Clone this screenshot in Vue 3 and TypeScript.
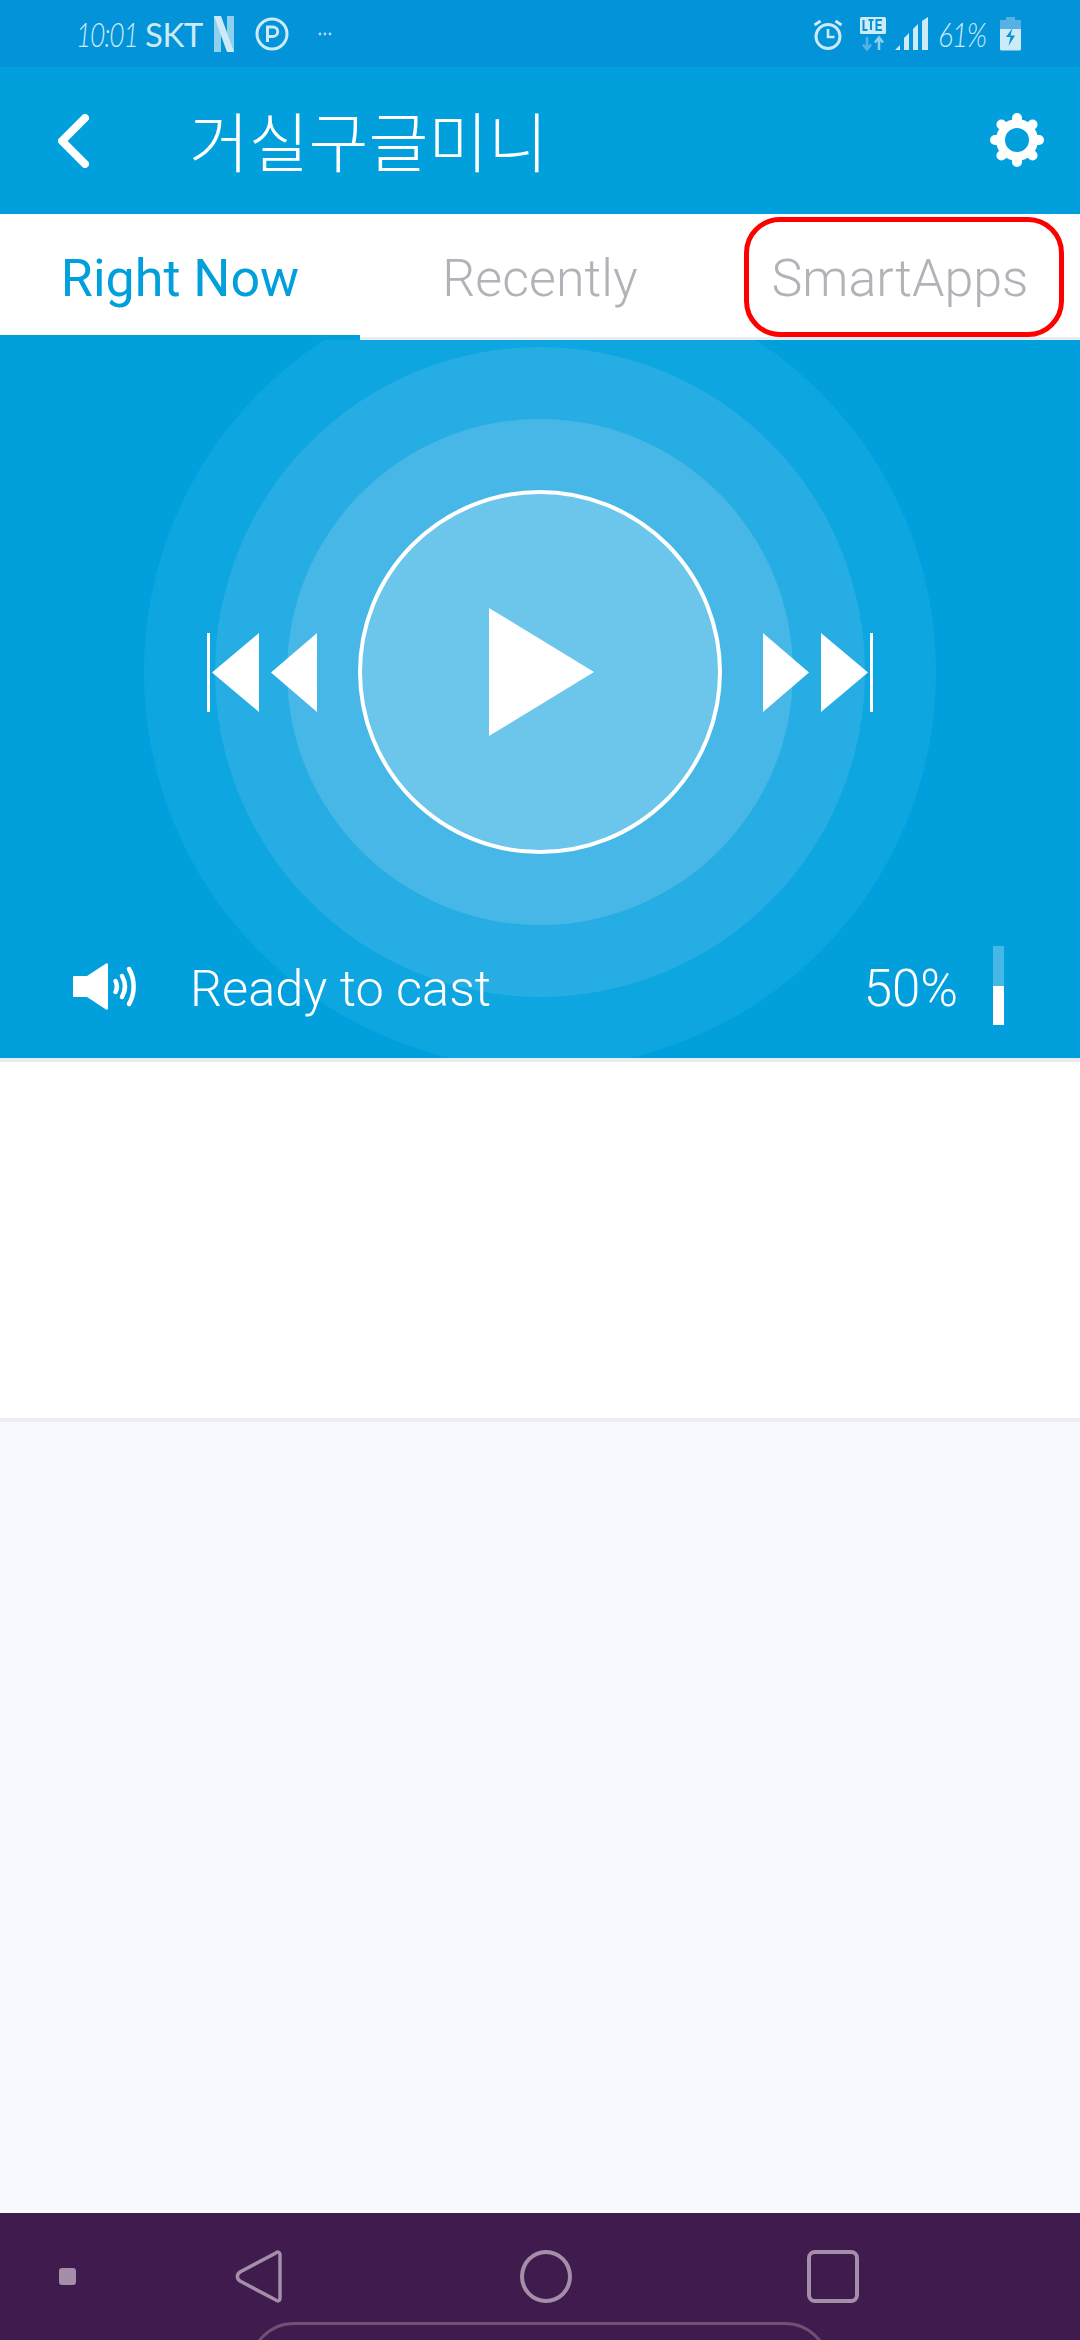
<script setup lang="ts">
const gearTeeth = [0, 45, 90, 135, 180, 225, 270, 315]
const volume = 50
</script>

<template>
  <div class="screen">
    <div class="status-bar">
      <span class="status-clock">10:01</span>
      <span class="status-carrier">SKT</span>
      <svg class="icon-netflix" width="20" height="36" viewBox="0 0 20 36">
        <path d="M0 0h7v36l-7 1z" fill="#8fd0ee" />
        <path d="M13 0h7v36l-7-1z" fill="#8fd0ee" />
        <path d="M0 0h7l13 36h-7z" fill="#cdeaf7" />
      </svg>
      <svg class="icon-parking" width="34" height="34" viewBox="0 0 34 34">
        <circle cx="17" cy="17" r="15" fill="none" stroke="#cdeaf7" stroke-width="3" />
        <path d="M12.5 25V10h5.5a4.6 4.6 0 0 1 0 9.4h-5.500" fill="none" stroke="#cdeaf7" stroke-width="3" />
      </svg>
      <svg class="icon-dots" width="14" height="4" viewBox="0 0 14 4">
        <circle cx="2" cy="2" r="1.400" fill="#a9dbf2" />
        <circle cx="7" cy="2" r="1.400" fill="#a9dbf2" />
        <circle cx="12" cy="2" r="1.400" fill="#a9dbf2" />
      </svg>
      <svg class="icon-alarm" width="30" height="34" viewBox="0 0 30 34">
        <circle cx="15" cy="19.500" r="12" fill="none" stroke="#cdeaf7" stroke-width="3" />
        <path d="M15 12v8h6.500" fill="none" stroke="#cdeaf7" stroke-width="2.600" />
        <path d="M1.500 8l6-4M28.500 8l-6-4" fill="none" stroke="#cdeaf7" stroke-width="3" />
      </svg>
      <svg class="icon-lte" width="26" height="34" viewBox="0 0 26 34">
        <rect x="0" y="0" width="26" height="17" rx="1.500" fill="#cdeaf7" />
        <path d="M3.500 3v10h4M11 3v10M8.500 3h5M22 3h-5.500v10H22M16.500 8h5" fill="none" stroke="#0393d8" stroke-width="2" />
        <path d="M7 20v12M3 27.500l4 5 4-5" fill="none" stroke="#55b2e2" stroke-width="2.500" />
        <path d="M19 33V21M15 25.500l4-5 4 5" fill="none" stroke="#8fd0ee" stroke-width="2.500" />
      </svg>
      <svg class="icon-signal" width="33" height="33" viewBox="0 0 33 33">
        <path d="M0 33l5-5v5zM9 33V21l5-5v17zM18 33V12l5-5v26zM27 33V4l6-4v33z" fill="#cdeaf7" />
      </svg>
      <span class="status-battery-text">61%</span>
      <svg class="icon-battery" width="21" height="34" viewBox="0 0 21 34">
        <path d="M6 0h9v3h6v9H0V3h6z" fill="#55b2e2" />
        <path d="M0 12h21v20a1.500 1.500 0 0 1-1.500 1.500h-18A1.500 1.500 0 0 1 0 32z" fill="#cdeaf7" />
        <path d="M12.500 11L6 20h4.500l-2 9L15 18.500h-4.500z" fill="#0393d8" />
      </svg>
    </div>

    <header class="app-header">
      <svg class="back-icon" width="31" height="54" viewBox="0 0 31 54">
        <path d="M27 4L4 27l23 23" fill="none" stroke="#fff" stroke-width="8" stroke-linecap="round" stroke-linejoin="round" />
      </svg>
      <h1 class="title">거실구글미니</h1>
      <svg class="gear-icon" width="56" height="56" viewBox="0 0 56 56">
        <circle cx="28" cy="28" r="16.500" fill="none" stroke="#fff" stroke-width="9" />
        <path
          v-for="angle in gearTeeth"
          :key="angle"
          d="M28 9v-3"
          stroke="#fff"
          stroke-width="10"
          stroke-linecap="round"
          :transform="`rotate(${angle} 28 28)`"
        />
      </svg>
    </header>

    <nav class="tabs">
      <div class="tab active">Right Now</div>
      <div class="tab">Recently</div>
      <div class="tab">SmartApps</div>
      <div class="highlight"></div>
    </nav>

    <section class="hero">
      <div class="stage">
        <div class="ring ring-outer"></div>
        <div class="ring ring-wide"></div>
        <div class="ring ring-inner"></div>
        <svg class="skip" width="110" height="79" viewBox="0 0 110 79">
          <rect x="0" y="0" width="3" height="79" fill="#fff" />
          <path d="M52 0v79L5 39.500zM110 0v79L64 39.500z" fill="#fff" />
        </svg>
        <div class="play-button">
          <svg width="105" height="128" viewBox="0 0 105 128">
            <path d="M0 0l105 64L0 128z" fill="#fff" />
          </svg>
        </div>
        <svg class="skip" width="110" height="79" viewBox="0 0 110 79">
          <path d="M0 0v79l46-39.500zM58 0v79l47-39.500z" fill="#fff" />
          <rect x="107" y="0" width="3" height="79" fill="#fff" />
        </svg>
      </div>

      <div class="cast-row">
        <svg class="speaker" width="67" height="47" viewBox="0 0 67 47">
          <path d="M1 13h13L33 .500a1.500 1.500 0 0 1 2 1V45.500a1.500 1.500 0 0 1-2 1L14 34H1a1 1 0 0 1-1-1V14a1 1 0 0 1 1-1z" fill="#fff" />
          <path d="M42.500 18c1.800 3.500 1.800 7.500 0 11M49 13c3.700 6.500 3.700 14.500 0 21M56 6c6.200 10.500 6.200 24.500 0 35" fill="none" stroke="#fff" stroke-width="4.500" stroke-linecap="round" />
        </svg>
        <span class="cast-label">Ready to cast</span>
        <span class="volume-label">{{ volume }}%</span>
        <div class="volume-bar">
          <div class="volume-fill" :style="{ height: volume + '%' }"></div>
        </div>
      </div>
    </section>

    <div class="blank-panel"></div>
    <div class="page-fill"></div>

    <footer class="nav-bar">
      <span class="nav-dot"></span>
      <svg class="nav-back" width="47" height="53" viewBox="0 0 47 53">
        <path d="M40 3.500c3-2.500 5-1.500 5 2v42c0 3.500-2 4.500-5 2L5 31c-3.500-2.500-3.500-6.500 0-9z" fill="none" stroke="#a48ea9" stroke-width="3.500" stroke-linejoin="round" />
      </svg>
      <span class="nav-home"></span>
      <span class="nav-recent"></span>
      <span class="gesture-pill"></span>
    </footer>
  </div>
</template>

<style>
html,
body {
  margin: 0;
  background: #f8f9fe;
}
</style>

<style scoped>
.screen {
  width: 1080px;
  height: 2340px;
  display: flex;
  flex-direction: column;
  overflow: hidden;
  font-family: Roboto, "Noto Sans CJK KR", sans-serif;
}

.status-bar {
  height: 67px;
  flex: none;
  display: flex;
  align-items: center;
  background: #0393d8;
  color: #cdeaf7;
  padding-left: 76px;
  box-sizing: border-box;
}

.status-clock {
  font-family: Lato, sans-serif;
  font-size: 33px;
  font-style: italic;
  font-weight: 300;
  letter-spacing: -1.5px;
  width: 69px;
  transform: scaleX(0.8);
  transform-origin: left center;
}

.status-carrier {
  font-family: Lato, sans-serif;
  font-size: 33px;
  letter-spacing: -0.5px;
  width: 69px;
}

.icon-parking {
  margin-left: 21px;
}

.icon-dots {
  margin-left: 29px;
}

.icon-alarm {
  margin-left: 481px;
}

.icon-lte {
  margin-left: 17px;
}

.icon-signal {
  margin-left: 9px;
}

.status-battery-text {
  font-family: Lato, sans-serif;
  font-size: 33px;
  font-style: italic;
  font-weight: 300;
  letter-spacing: -1.5px;
  margin-left: 10px;
  width: 62px;
  transform: scaleX(0.85);
  transform-origin: left center;
}

.app-header {
  height: 147px;
  flex: none;
  display: flex;
  align-items: center;
  background: #01a0dc;
  padding: 0 35px 2px 58px;
  box-sizing: border-box;
}

.back-icon {
  margin-top: 2px;
}

.title {
  margin: 0 0 0 100px;
  font-size: 65px;
  font-weight: 300;
  color: #fff;
  font-family: "Noto Sans CJK KR", sans-serif;
  line-height: 1;
}

.gear-icon {
  margin-left: auto;
}

.tabs {
  position: relative;
  height: 126px;
  flex: none;
  display: flex;
  background: #fff;
  border-bottom: 3px solid #e9edf1;
  box-sizing: border-box;
}

.tab {
  width: 360px;
  display: flex;
  align-items: center;
  justify-content: center;
  padding-top: 6px;
  font-size: 52px;
  font-weight: 300;
  color: #b1b3b9;
  box-sizing: border-box;
}

.tab.active {
  color: #01a0dc;
  font-weight: 400;
  height: 126px;
  border-bottom: 5px solid #01a0dc;
  padding-top: 8px;
}

.highlight {
  position: absolute;
  left: 744px;
  top: 3px;
  width: 320px;
  height: 120px;
  border: 5px solid #fe0000;
  border-radius: 36px;
  box-sizing: border-box;
}

.hero {
  position: relative;
  height: 718px;
  flex: none;
  background: #01a0dc;
  overflow: hidden;
  color: #fff;
}

.stage {
  position: relative;
  display: flex;
  align-items: center;
  justify-content: center;
  gap: 41px;
  margin-top: 150px;
  height: 364px;
}

.ring {
  position: absolute;
  left: 50%;
  top: 50%;
  border-radius: 50%;
  transform: translate(-50%, -50%);
}

.ring-outer {
  width: 792px;
  height: 792px;
  background: #0da6e0;
}

.ring-wide {
  width: 650px;
  height: 650px;
  background: #26ade3;
}

.ring-inner {
  width: 506px;
  height: 506px;
  background: #46b7e6;
}

.skip {
  position: relative;
  flex: none;
}

.play-button {
  position: relative;
  width: 364px;
  height: 364px;
  flex: none;
  display: flex;
  align-items: center;
  justify-content: center;
  border: 4px solid #fff;
  border-radius: 50%;
  background: #6cc5ea;
  box-sizing: border-box;
}

.play-button svg {
  margin-left: 2px;
}

.cast-row {
  position: relative;
  display: flex;
  align-items: center;
  height: 79px;
  margin-top: 92px;
  padding: 0 76px 0 73px;
}

.speaker {
  margin-top: 2px;
}

.cast-label {
  margin-left: 50px;
  padding-top: 5px;
  font-size: 50.500px;
  font-weight: 300;
}

.volume-label {
  margin-left: auto;
  padding-top: 5px;
  font-size: 51px;
  font-weight: 350;
}

.volume-bar {
  position: relative;
  width: 11px;
  height: 79px;
  margin-left: 35px;
  background: #46b7e6;
}

.volume-fill {
  position: absolute;
  left: 0;
  right: 0;
  bottom: 0;
  background: #fff;
}

.blank-panel {
  flex: none;
  height: 356px;
  background: #fff;
  border-top: 4px solid #e9ebf0;
  border-bottom: 4px solid #eceef3;
}

.page-fill {
  flex: 1;
  background: #f8f9fe;
}

.nav-bar {
  position: relative;
  height: 127px;
  flex: none;
  display: flex;
  align-items: flex-start;
  padding: 37px 0 0 59px;
  background: #3f1c4d;
  box-sizing: border-box;
  overflow: hidden;
}

.nav-dot {
  width: 17px;
  height: 17px;
  margin-top: 18px;
  border-radius: 3px;
  background: #a48ea9;
}

.nav-back {
  margin-left: 159px;
}

.nav-home {
  width: 52px;
  height: 53px;
  margin-left: 238px;
  border: 4px solid #a48ea9;
  border-radius: 50%;
  box-sizing: border-box;
}

.nav-recent {
  width: 52px;
  height: 53px;
  margin-left: 235px;
  border: 4px solid #a48ea9;
  border-radius: 8px;
  box-sizing: border-box;
}

.gesture-pill {
  position: absolute;
  left: 249px;
  top: 109px;
  width: 581px;
  height: 90px;
  border: 3px solid #6d5273;
  border-radius: 45px;
  box-sizing: border-box;
}
</style>
